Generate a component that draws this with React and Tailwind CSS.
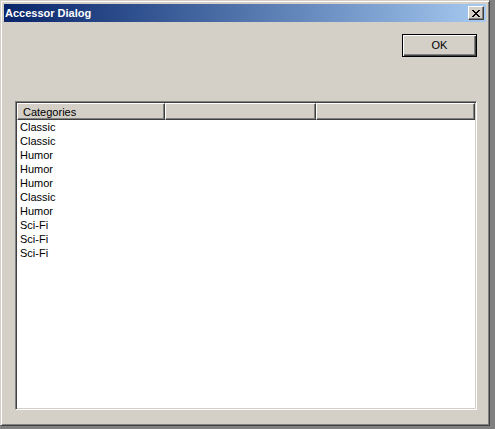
const rows = ["Classic", "Classic", "Humor", "Humor", "Humor", "Classic", "Humor", "Sci-Fi", "Sci-Fi", "Sci-Fi"];

const HeaderCell = ({ label, className }) => (
  <div
    className={`h-[17px] flex items-center pl-[5px] pt-[1px] text-[11px] leading-none text-black border-t border-l border-t-white border-l-white border-r border-b border-r-[#404040] border-b-[#404040] shadow-[inset_-1px_-1px_#808080] ${className}`}
  >
    {label}
  </div>
);

export default function App() {
  return (
    <div className="w-[495px] h-[429px] bg-[#808080] font-['Liberation_Sans',Arial,sans-serif]">
      <div className="w-[490px] h-[426px] bg-[#d4d0c8] flex flex-col p-[3px] border border-t-[#d4d0c8] border-l-[#d4d0c8] border-r-[#404040] border-b-[#404040] shadow-[inset_1px_1px_#fff,inset_-1px_-1px_#808080]">
        {/* title bar */}
        <div className="h-[18px] flex items-center justify-between pl-[1px] pr-[2px] bg-gradient-to-r from-[#0a246a] to-[#a6caf0]">
          <span className="text-white font-bold text-[11px] leading-none">Accessor Dialog</span>
          <button className="w-[16px] h-[14px] bg-[#d4d0c8] flex items-center justify-center border border-t-white border-l-white border-r-[#404040] border-b-[#404040] shadow-[inset_-1px_-1px_#808080]">
            <svg width="8" height="7" viewBox="0 0 8 7">
              <path d="M0 0h2v1h1v1h2V1h1V0h2v1H7v1H6v1H5v1h1v1h1v1h1v1H6V6H5V5H3v1H2v1H0V6h1V5h1V4h1V3H2V2H1V1H0z" fill="#000" />
            </svg>
          </button>
        </div>

        {/* body */}
        <div className="flex-1 flex flex-col pl-[11px] pr-[9px]">
          <div className="flex justify-end mt-[12px]">
            <button className="w-[75px] h-[23px] border border-black bg-[#d4d0c8] shadow-[inset_1px_1px_#fff,inset_-1px_-1px_#404040,inset_-2px_-2px_#808080] text-[11px] text-black flex items-center justify-center">
              OK
            </button>
          </div>

          <div className="mt-[44px] h-[309px] flex flex-col border border-t-[#808080] border-l-[#808080] border-r-white border-b-white shadow-[inset_1px_1px_#404040,inset_-1px_-1px_#d4d0c8] p-[1px] bg-white">
            <div className="flex bg-[#d4d0c8]">
              <HeaderCell label="Categories" className="w-[148px]" />
              <HeaderCell label="" className="w-[151px]" />
              <HeaderCell label="" className="flex-1" />
            </div>
            <div className="flex-1 bg-white">
              {rows.map((r, i) => (
                <div key={i} className="h-[14px] flex items-center pl-[3px] text-[11px] leading-none text-black">
                  {r}
                </div>
              ))}
            </div>
          </div>
        </div>
      </div>
    </div>
  );
}
